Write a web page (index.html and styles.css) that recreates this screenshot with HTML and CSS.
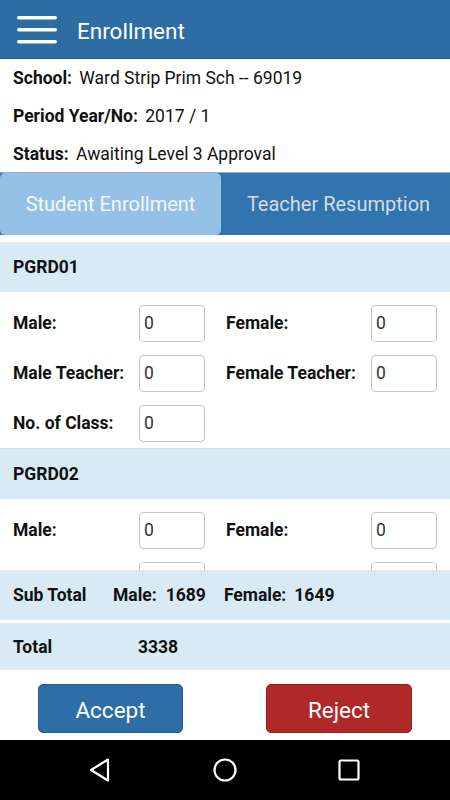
FILE: index.html
```html
<!DOCTYPE html>
<html>
<head>
<meta charset="utf-8">
<link rel="stylesheet" href="styles.css">
</head>
<body>
<div class="app">
  <header class="appbar">
    <svg class="menu" width="40" height="28" viewBox="0 0 40 28">
      <rect x="0" y="0" width="40" height="3.5" rx="1.7" fill="#fff"/>
      <rect x="0" y="12" width="40" height="3.5" rx="1.7" fill="#fff"/>
      <rect x="0" y="24" width="40" height="3.5" rx="1.7" fill="#fff"/>
    </svg>
    <span class="title">Enrollment</span>
  </header>

  <section class="info">
    <div class="info-row"><b>School:</b> Ward Strip Prim Sch -- 69019</div>
    <div class="info-row"><b>Period Year/No:</b> 2017 / 1</div>
    <div class="info-row"><b>Status:</b> Awaiting Level 3 Approval</div>
  </section>

  <nav class="tabs">
    <div class="tab active">Student Enrollment</div>
    <div class="tab inactive">Teacher Resumption</div>
  </nav>

  <main class="scroll">
    <div class="group">
      <div class="group-head">PGRD01</div>
      <div class="group-body">
        <div class="row">
          <span class="lbl">Male:</span><span class="inp">0</span>
          <span class="lbl lbl2">Female:</span><span class="inp">0</span>
        </div>
        <div class="row">
          <span class="lbl">Male Teacher:</span><span class="inp">0</span>
          <span class="lbl lbl2">Female Teacher:</span><span class="inp">0</span>
        </div>
        <div class="row">
          <span class="lbl">No. of Class:</span><span class="inp">0</span>
        </div>
      </div>
    </div>
    <div class="group">
      <div class="group-head">PGRD02</div>
      <div class="group-body">
        <div class="row">
          <span class="lbl">Male:</span><span class="inp">0</span>
          <span class="lbl lbl2">Female:</span><span class="inp">0</span>
        </div>
        <div class="row">
          <span class="lbl"></span><span class="inp"></span>
          <span class="lbl lbl2"></span><span class="inp"></span>
        </div>
      </div>
    </div>
  </main>

  <div class="sum subtotal">
    <span class="s-lbl">Sub Total</span>
    <span class="s-m">Male:</span><span class="s-mv">1689</span>
    <span class="s-f">Female:</span><span class="s-fv">1649</span>
  </div>
  <div class="sum total">
    <span class="s-lbl">Total</span>
    <span class="s-tv">3338</span>
  </div>

  <div class="actions">
    <button class="btn accept">Accept</button>
    <button class="btn reject">Reject</button>
  </div>

  <footer class="navbar">
    <svg width="24" height="26" viewBox="0 0 24 26"><path d="M20 2.5 L3 13 L20 23.5 Z" fill="none" stroke="#fff" stroke-width="2.2" stroke-linejoin="round"/></svg>
    <svg width="26" height="26" viewBox="0 0 26 26"><circle cx="13" cy="13" r="10.5" fill="none" stroke="#fff" stroke-width="2.2"/></svg>
    <svg width="24" height="24" viewBox="0 0 24 24"><rect x="2.5" y="2.5" width="19" height="19" rx="1.5" fill="none" stroke="#fff" stroke-width="2.2"/></svg>
  </footer>
</div>
</body>
</html>
```

FILE: styles.css
```css
* { box-sizing: border-box; }
html, body { margin: 0; padding: 0; }
body {
  width: 450px;
  height: 800px;
  overflow: hidden;
  font-family: Roboto, "Noto Sans", "Liberation Sans", sans-serif;
  color: #111;
  background: #fff;
}
.app {
  display: flex;
  flex-direction: column;
  height: 800px;
}
.appbar {
  height: 59px;
  flex: none;
  background: #2e6ca4;
  border-bottom: 1px solid #245b8e;
  display: flex;
  align-items: center;
  padding-left: 17px;
}
.menu { display: block; margin-top: 1px; }
.title {
  color: #fff;
  font-size: 22.5px;
  line-height: 26px;
  margin-left: 20px;
  margin-top: 4px;
}
.info {
  flex: none;
  height: 113px;
}
.info-row {
  height: 38px;
  line-height: 38px;
  font-size: 17.5px;
  padding-left: 13px;
  color: #111;
  white-space: nowrap;
}
.info-row b { margin-right: 3px; }
.tabs {
  flex: none;
  height: 63px;
  background: #3174b0;
  border-top: 1px solid #8fb3d4;
  display: flex;
}
.tab {
  flex: 1;
  display: flex;
  align-items: center;
  justify-content: center;
  font-size: 20px;
  color: #d5dce4;
  white-space: nowrap;
}
.tab.inactive { padding-left: 6px; }
.tab.active {
  flex: none;
  width: 221px;
  background: #95c1e7;
  color: #f4f8fc;
  border-radius: 5px;
}
.scroll {
  flex: 1;
  overflow: hidden;
  padding-top: 7px;
}
.group-head {
  height: 50px;
  background: #d8ebf5;
  font-weight: bold;
  font-size: 17.5px;
  line-height: 50px;
  padding-left: 13px;
}
.group-body {
  padding-top: 6px;
  border-bottom: 1px solid #dcdcdc;
}
.row {
  height: 50px;
  display: grid;
  grid-template-columns: 126px 66px 166px 66px;
  align-items: center;
  padding-left: 13px;
}
.lbl {
  font-weight: bold;
  font-size: 17.5px;
  line-height: 22px;
  white-space: nowrap;
}
.lbl2 { padding-left: 21px; }
.inp {
  height: 37px;
  border: 1px solid #c4c4c4;
  border-radius: 4px;
  font-size: 17.5px;
  line-height: 35px;
  padding-left: 4px;
  color: #333;
}
.sum {
  flex: none;
  background: #d8ebf5;
  display: flex;
  align-items: center;
  font-weight: bold;
  font-size: 17.5px;
  line-height: 22px;
  padding-left: 13px;
  white-space: nowrap;
}
.subtotal { height: 50px; }
.total { height: 47px; margin-top: 3px; }
.s-lbl { width: 100px; }
.s-m { margin-right: 9px; }
.s-mv { margin-right: 18px; }
.s-f { margin-right: 8px; }
.s-tv { margin-left: 25px; }
.actions {
  flex: none;
  height: 70px;
  display: flex;
  align-items: flex-start;
  justify-content: space-between;
  padding: 14px 38px 0;
}
.btn {
  width: 145px;
  height: 49px;
  border-radius: 5px;
  color: #fff;
  font-family: inherit;
  font-size: 22.5px;
  padding: 3px 0 0;
  line-height: 44px;
}
.accept {
  background: #2e6da5;
  border: 1px solid #255e92;
}
.reject {
  width: 146px;
  background: #b02828;
  border: 1px solid #9a1e1e;
}
.navbar {
  flex: none;
  height: 60px;
  background: #000;
  display: flex;
  align-items: center;
  justify-content: space-between;
  padding: 0 89px 0 88px;
}
.navbar svg { display: block; }
```
